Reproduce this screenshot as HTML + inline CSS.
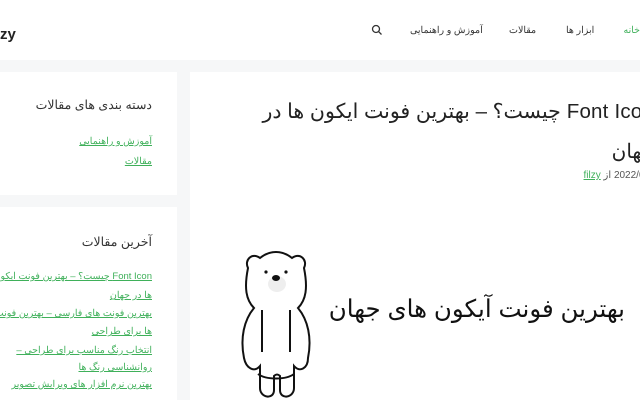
<!DOCTYPE html>
<html><head><meta charset="utf-8"><style>
*{margin:0;padding:0;box-sizing:border-box}
body{width:640px;height:400px;overflow:hidden;background:#f6f7f8;font-family:"Liberation Sans","Noto Sans CJK SC",sans-serif;position:relative;color:#222}
.a{position:absolute;white-space:nowrap}
.r{direction:rtl}
.hdr{position:absolute;left:0;top:0;width:640px;height:60px;background:#fff}
.box{position:absolute;background:#fff}
.lk{color:#3fb05a;text-decoration:underline;font-size:9.5px}
</style></head><body>
<div class="hdr"></div>
<div class="a" style="left:0;top:26px;font-size:15px;font-weight:bold;color:#222">zy</div>
<div class="a r" style="right:0;top:25px;font-size:9.5px;color:#3fb05a">خانه</div>
<div class="a r" style="left:566px;top:25px;font-size:9.5px;color:#333">ابزار ها</div>
<div class="a r" style="left:509px;top:25px;font-size:9.5px;color:#333">مقالات</div>
<div class="a r" style="left:410px;top:25px;font-size:9.5px;color:#333">آموزش و راهنمایی</div>
<svg class="a" style="left:371px;top:24px" width="12" height="12" viewBox="0 0 12 12"><circle cx="5" cy="5" r="3.5" fill="none" stroke="#333" stroke-width="1.3"/><path d="M7.6 7.6L10.5 10.5" stroke="#333" stroke-width="1.3"/></svg>

<div class="box" style="left:0;top:72px;width:177px;height:123px"></div>
<div class="box" style="left:0;top:207px;width:177px;height:193px"></div>
<div class="box" style="left:190px;top:72px;width:450px;height:328px"></div>

<div class="a r" style="right:488px;top:97px;font-size:12.5px;color:#333">دسته بندی های مقالات</div>
<div class="a r lk" style="right:488px;top:136px">آموزش و راهنمایی</div>
<div class="a r lk" style="right:488px;top:156px">مقالات</div>

<div class="a r" style="right:488px;top:234px;font-size:12.5px;color:#333">آخرین مقالات</div>
<div class="a r lk" style="right:488px;top:271px">Font Icon چیست؟ – بهترین فونت ایکون</div>
<div class="a r lk" style="right:488px;top:290px">ها در جهان</div>
<div class="a r lk" style="right:488px;top:308px">بهترین فونت های فارسی – بهترین فونت</div>
<div class="a r lk" style="right:488px;top:326px">ها برای طراحی</div>
<div class="a r lk" style="right:488px;top:345px">انتخاب رنگ مناسب برای طراحی –</div>
<div class="a r lk" style="right:488px;top:362px">روانشناسی رنگ ها</div>
<div class="a r lk" style="right:488px;top:379px">بهترین نرم افزار های ویرایش تصویر</div>

<div class="a r" style="right:-14px;top:99px;font-size:20.5px;color:#222;letter-spacing:0.2px">Font Icon چیست؟ – بهترین فونت ایکون ها در</div>
<div class="a r" style="right:-14px;top:139px;font-size:20px;color:#222">جهان</div>
<div class="a r" style="right:-24px;top:170px;font-size:10px;color:#555">2022/03/05 از <span style="color:#3fb05a;text-decoration:underline">filzy</span></div>

<svg class="a" style="left:240px;top:248px" width="72" height="152" viewBox="0 0 72 152">
<g fill="none" stroke="#111" stroke-width="2">
<path d="M20 10 C12 4 4 12 8 20 C4 40 6 52 14 60 C4 72 0 90 4 110 C6 120 14 125 20 118 L20 140 C20 150 34 152 34 142 L34 128 C36 126 38 126 40 128 L40 142 C40 152 54 150 54 140 L54 118 C60 125 68 120 68 110 C72 90 68 72 58 60 C66 52 68 40 64 20 C68 12 60 4 52 10 C42 2 30 2 20 10Z"/>
<path d="M22 62 L22 104 M50 62 L50 104 M18 126 C26 132 46 132 54 126"/>
</g>
<ellipse cx="37" cy="36" rx="9" ry="8" fill="#eee"/>
<ellipse cx="36" cy="30" rx="4" ry="3" fill="#111"/>
<circle cx="26" cy="24" r="1.6" fill="#111"/><circle cx="46" cy="24" r="1.6" fill="#111"/>
</svg>
<div class="a r" style="right:15px;top:294px;font-size:24.5px;color:#111">بهترین فونت آیکون های جهان</div>
</body></html>
